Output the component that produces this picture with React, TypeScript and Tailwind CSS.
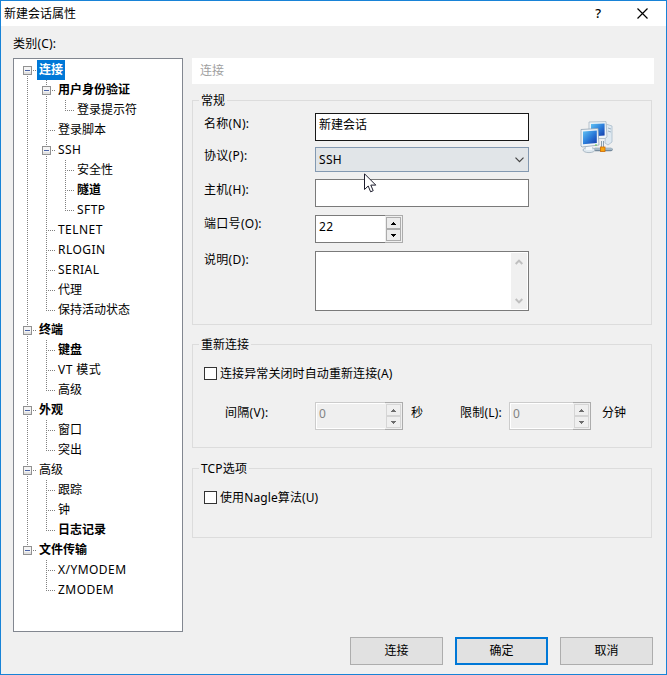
import { useState } from 'react';
import clsx from 'clsx';

type TreeItem = {
  label: string;
  bold?: boolean;
  children?: TreeItem[];
};

const treeItems: TreeItem[] = [
  {
    label: '连接',
    bold: true,
    children: [
      { label: '用户身份验证', bold: true, children: [{ label: '登录提示符' }] },
      { label: '登录脚本' },
      {
        label: 'SSH',
        children: [{ label: '安全性' }, { label: '隧道', bold: true }, { label: 'SFTP' }],
      },
      { label: 'TELNET' },
      { label: 'RLOGIN' },
      { label: 'SERIAL' },
      { label: '代理' },
      { label: '保持活动状态' },
    ],
  },
  {
    label: '终端',
    bold: true,
    children: [{ label: '键盘', bold: true }, { label: 'VT 模式' }, { label: '高级' }],
  },
  { label: '外观', bold: true, children: [{ label: '窗口' }, { label: '突出' }] },
  {
    label: '高级',
    children: [{ label: '跟踪' }, { label: '钟' }, { label: '日志记录', bold: true }],
  },
  { label: '文件传输', bold: true, children: [{ label: 'X/YMODEM' }, { label: 'ZMODEM' }] },
];

// Dotted guide line of an ancestor level
const Guide = ({ visible }: { visible: boolean }) => (
  <svg className="h-5 w-[19px] shrink-0" viewBox="0 0 19 20" shapeRendering="crispEdges">
    {visible && <path d="M9.5 0V20" stroke="#808080" strokeDasharray="1 1" />}
  </svg>
);

// Guide line next to the label, with the expand box if the item has children
const Joint = ({ first, last, box }: { first: boolean; last: boolean; box: boolean }) => (
  <svg className="h-5 w-[19px] shrink-0" viewBox="0 0 19 20" shapeRendering="crispEdges">
    {!first && <path d="M9.5 0V10" stroke="#808080" strokeDasharray="1 1" />}
    {!last && <path d="M9.5 10V20" stroke="#808080" strokeDasharray="1 1" />}
    <path d="M9 10.5H18" stroke="#808080" strokeDasharray="1 1" />
    {box && (
      <>
        <rect x="5.5" y="6.5" width="8" height="8" rx="1" fill="#f4f4f4" stroke="#919191" />
        <path d="M6 12.5H13M6 13.5H13" stroke="#e2e2e2" />
        <path d="M7 10.5H12" stroke="#4b63a7" />
      </>
    )}
  </svg>
);

type TreeProps = {
  items: TreeItem[];
  guides?: boolean[];
  selected: string;
  onSelect: (key: string) => void;
  parent?: string;
};

const Tree = ({ items, guides = [], selected, onSelect, parent = '' }: TreeProps) => (
  <ul>
    {items.map((item, i) => {
      const key = `${parent}/${item.label}`;
      const last = i === items.length - 1;
      return (
        <li key={key}>
          <div className="flex h-5">
            {guides.map((visible, n) => (
              <Guide key={n} visible={visible} />
            ))}
            <Joint first={i === 0 && guides.length === 0} last={last} box={!!item.children} />
            <span
              onClick={() => onSelect(key)}
              className={clsx(
                'cursor-default px-[2px] leading-5 whitespace-nowrap',
                item.bold && 'font-bold',
                /[A-Z]/.test(item.label) && 'tracking-[0.45px]',
                selected === key && 'bg-[#0078d7] text-white'
              )}
            >
              {item.label}
            </span>
          </div>
          {item.children && (
            <Tree
              items={item.children}
              guides={[...guides, !last]}
              selected={selected}
              onSelect={onSelect}
              parent={key}
            />
          )}
        </li>
      );
    })}
  </ul>
);

const SpinButton = ({ down, disabled }: { down?: boolean; disabled?: boolean }) => (
  <button
    disabled={disabled}
    className={clsx(
      'flex h-3 w-[15px] items-center justify-center border',
      disabled ? 'border-[#d5d5d5] bg-[#efefef]' : 'border-[#acacac] bg-[#ececec]'
    )}
  >
    <svg width="5" height="3" viewBox="0 0 5 3" shapeRendering="crispEdges">
      <path
        d={down ? 'M0 0H5V1H4V2H3V3H2V2H1V1H0Z' : 'M2 0H3V1H4V2H5V3H0V2H1V1H2Z'}
        fill={disabled ? '#6d6d6d' : '#000'}
      />
    </svg>
  </button>
);

const Spinner = ({ value, disabled, className }: { value: string; disabled?: boolean; className?: string }) => (
  <div className={clsx('flex h-7', className)}>
    <div
      className={clsx(
        'flex-1 border border-r-0 pl-[3px] leading-[22px] tracking-[0.3px]',
        disabled
          ? 'border-[#cccccc] bg-[#efefef] text-[#838383] shadow-[inset_1px_1px_0_#fff,inset_0_-1px_0_#fff]'
          : 'border-[#7a7a7a] bg-white'
      )}
    >
      {value}
    </div>
    <div className="w-[18px] border border-l-0 border-[#acacac] bg-[#efefef] pt-px pl-px">
      <SpinButton disabled={disabled} />
      <SpinButton down disabled={disabled} />
    </div>
  </div>
);

const Group = ({ title, className, children }: { title: string; className?: string; children: React.ReactNode }) => (
  <section className={clsx('w-[460px] border border-[#dcdcdc]', className)}>
    <h3 className="-mt-[10px] ml-1.5 h-5 w-fit bg-[#f0f0f0] px-0.5 leading-5">{title}</h3>
    {children}
  </section>
);

const Field = ({ label, className, children }: { label: string; className?: string; children: React.ReactNode }) => (
  <div className={clsx('flex items-start', className)}>
    <label className="w-[111px] leading-[22px] tracking-[0.3px]">{label}</label>
    {children}
  </div>
);

const CheckBox = ({ label, className }: { label: string; className?: string }) => {
  const [checked, setChecked] = useState(false);
  return (
    <div className={clsx('flex items-start gap-[3px]', className)} onClick={() => setChecked(!checked)}>
      <span className="mt-[3px] flex size-[13px] items-center justify-center border border-[#333333] bg-white">
        {checked && <span className="size-[7px] bg-[#333333]" />}
      </span>
      <span className="leading-5 tracking-[0.1px]">{label}</span>
    </div>
  );
};

const SessionIcon = () => (
  <svg width="34" height="34" viewBox="0 0 34 34">
    <defs>
      <linearGradient id="screen" x1="0" y1="0" x2="1" y2="1">
        <stop offset="0" stopColor="#62c3f3" />
        <stop offset="0.5" stopColor="#2d7fdb" />
        <stop offset="1" stopColor="#1238a8" />
      </linearGradient>
    </defs>
    {/* tower */}
    <path d="M26 3L32 5V21L28 24L25 22Z" fill="#dfe9f1" stroke="#aabccb" strokeWidth="0.8" />
    <path d="M28 7L31 8M28 10L31 11" stroke="#9fb3c5" />
    {/* rear monitor */}
    <path d="M9 1L26 .6L27 16L25 17.5H9Z" fill="#eef4f8" stroke="#a7b6c3" strokeWidth="0.8" />
    <path d="M11 3L24.6 2.6V14.5L11 15.5Z" fill="url(#screen)" />
    {/* network cable */}
    <path d="M15 28.5H31" stroke="#74899b" strokeWidth="3.4" strokeLinecap="round" />
    <path d="M14 28H32" stroke="#c7d7e2" strokeWidth="1.2" />
    <path d="M22.5 20V27" stroke="#8295a5" strokeWidth="3" />
    <path d="M22.5 20V27" stroke="#e9f0f5" strokeWidth="1.2" />
    <rect x="20.5" y="26" width="4.5" height="4.5" fill="#f9a50c" stroke="#cf6c06" strokeWidth="0.8" />
    {/* front monitor */}
    <ellipse cx="9" cy="29" rx="6" ry="2.6" fill="#dfe9f0" stroke="#9cadbb" strokeWidth="0.8" />
    <path d="M6 25H12V29H6Z" fill="#f4f8fb" />
    <path d="M1 8.5L18 7.5L19 24L2 26L1 25Z" fill="#eef4f8" stroke="#93a5b4" strokeWidth="0.8" />
    <path d="M3 10.5L16.8 9.5V22L3 23.2Z" fill="url(#screen)" />
    <path d="M15 24H17" stroke="#5ecb43" />
  </svg>
);

const App: React.FC = () => {
  const [selected, setSelected] = useState('/连接');

  return (
    <div className="relative flex h-[675px] w-[667px] flex-col border border-[#1883d7] bg-[#f0f0f0] font-['Noto_Sans','Noto_Sans_CJK_SC',sans-serif] text-[12px] text-black select-none">
      {/* Title bar */}
      <header className="flex h-[25px] shrink-0 items-center bg-white pl-[3px]">
        <span className="flex-1">新建会话属性</span>
        <span className="mr-[36px] text-[13px] font-medium">?</span>
        <svg className="mr-[18px]" width="11" height="11" viewBox="0 0 11 11">
          <path d="M.5 .5L10.5 10.5M10.5 .5L.5 10.5" stroke="#000" strokeWidth="1.2" />
        </svg>
      </header>

      <main className="flex pl-3">
        {/* Category tree */}
        <div className="w-[170px] pt-2">
          <div className="h-6 leading-5 tracking-[0.2px]">类别(C):</div>
          <div className="h-[574px] border border-[#828790] bg-white pt-px pl-1">
            <Tree items={treeItems} selected={selected} onSelect={setSelected} />
          </div>
        </div>

        {/* Connection page */}
        <div className="ml-[9px] pt-8">
          <h2 className="h-[26px] w-[462px] bg-white pl-2 leading-[26px] text-[#a0a0a0]">连接</h2>

          <Group title="常规" className="mt-4 h-[225px]">
            <div className="flex pt-[2px] pl-[11px]">
              <div>
                <Field label="名称(N):">
                  <div className="h-7 w-[214px] border border-[#171717] bg-white pl-[3px] leading-[22px]">新建会话</div>
                </Field>
                <Field label="协议(P):" className="mt-1">
                  <div className="mt-0.5 flex h-[25px] w-[214px] items-center justify-between border border-[#8399b1] bg-[#e1e5e8] pr-1 pl-[3px]">
                    <span className="tracking-[0.3px]">SSH</span>
                    <svg width="9" height="6" viewBox="0 0 9 6">
                      <path d="M.5 .7L4.5 4.7L8.5 .7" fill="none" stroke="#444" strokeWidth="1.2" />
                    </svg>
                  </div>
                </Field>
                <Field label="主机(H):" className="mt-[7px]">
                  <div className="h-7 w-[214px] border border-[#7a7a7a] bg-white" />
                </Field>
                <Field label="端口号(O):" className="mt-1.5">
                  <Spinner value="22" className="mt-0.5 w-[88px]" />
                </Field>
                <Field label="说明(D):" className="mt-1.5">
                  <div className="mt-0.5 flex h-[60px] w-[214px] justify-end border border-[#7a7a7a] bg-white p-px">
                    <div className="flex w-4 flex-col items-center justify-between bg-[#f0f0f0] pt-1.5 pb-[5px]">
                      <svg width="8" height="6" viewBox="0 0 8 6">
                        <path d="M.7 5L4 1.6L7.3 5" fill="none" stroke="#bfbfbf" strokeWidth="2" />
                      </svg>
                      <svg width="8" height="6" viewBox="0 0 8 6">
                        <path d="M.7 1L4 4.4L7.3 1" fill="none" stroke="#bfbfbf" strokeWidth="2" />
                      </svg>
                    </div>
                  </div>
                </Field>
              </div>
              <div className="mt-2 ml-[51px]">
                <SessionIcon />
              </div>
            </div>
          </Group>

          <Group title="重新连接" className="mt-[19px] h-[104px]">
            <CheckBox label="连接异常关闭时自动重新连接(A)" className="mt-[9px] ml-[11px]" />
            <div className="mt-[18px] flex pl-8 leading-[22px]">
              <span className="w-[90px] tracking-[0.3px]">间隔(V):</span>
              <Spinner value="0" disabled className="w-[88px]" />
              <span className="ml-2 w-[49px]">秒</span>
              <span className="w-[49px] tracking-[0.2px]">限制(L):</span>
              <Spinner value="0" disabled className="w-[82px]" />
              <span className="ml-[11px]">分钟</span>
            </div>
          </Group>

          <Group title="TCP选项" className="mt-5 h-[70px] tracking-[0.15px]">
            <CheckBox label="使用Nagle算法(U)" className="mt-[9px] ml-[11px]" />
          </Group>
        </div>
      </main>

      <footer className="mt-[5px] flex justify-end gap-3 pr-[13px]">
        <button className="h-7 w-[93px] border border-[#adadad] bg-[#e1e1e1]">连接</button>
        <button className="h-7 w-[93px] border-2 border-[#0078d7] bg-[#e1e1e1]">确定</button>
        <button className="h-7 w-[93px] border border-[#adadad] bg-[#e1e1e1]">取消</button>
      </footer>

      {/* Mouse pointer */}
      <svg className="absolute top-[172px] left-[363px]" width="13" height="20" viewBox="0 0 13 20">
        <path
          d="M.5 .8V16.5L4.2 13L6.6 18.8L9.2 17.7L6.8 12.1H11.8Z"
          fill="#fff"
          stroke="#1c1c2c"
        />
      </svg>
    </div>
  );
};

export default App;
